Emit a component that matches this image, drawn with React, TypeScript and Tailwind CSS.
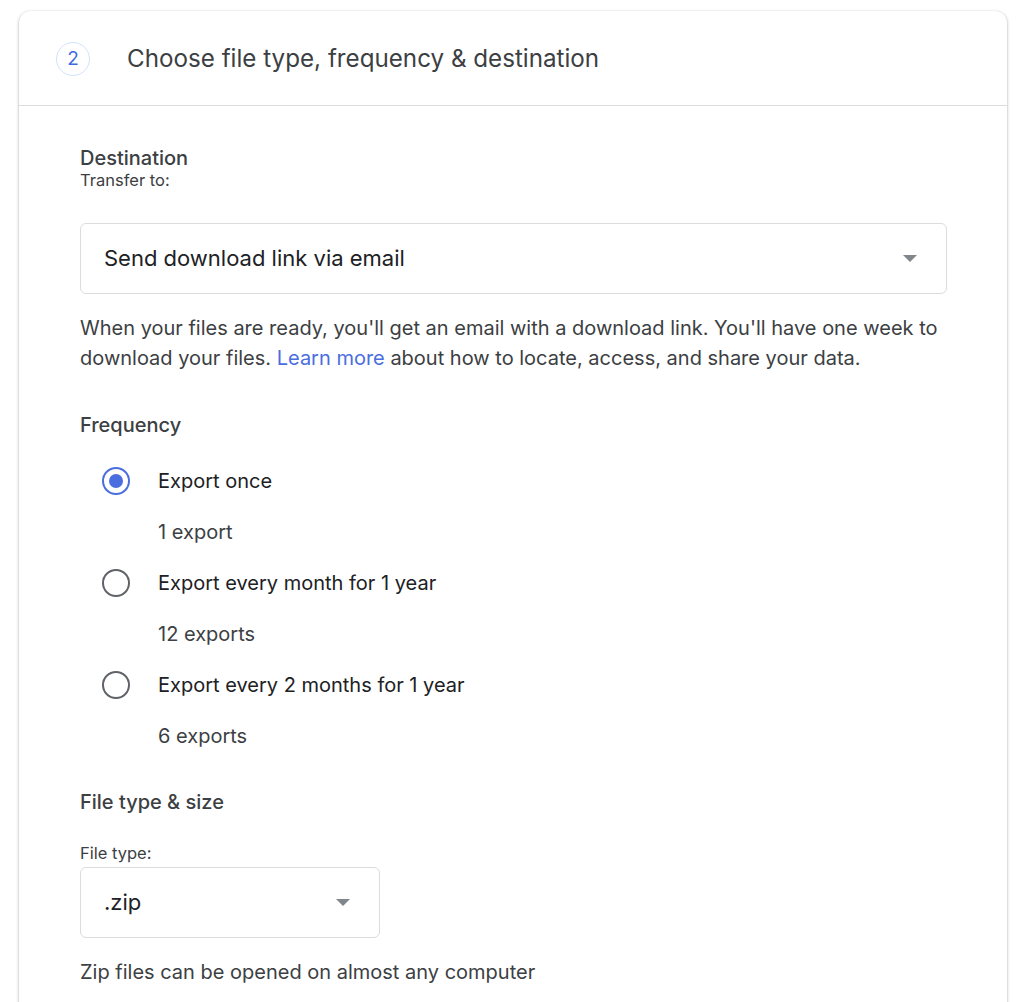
import { useState } from "react";

const font = { fontFamily: "Inter, 'Noto Sans', Arial, sans-serif" };

function Caret() {
  return (
    <svg width="14" height="8" viewBox="0 0 14 8" className="shrink-0">
      <path d="M0 0h14L7 7z" fill="#80868b" />
    </svg>
  );
}

function Select({ value, width }: { value: string; width: string }) {
  return (
    <div
      className={`flex h-[71px] items-center justify-between rounded-[6px] border border-[#dadce0] bg-white pl-[23px] pr-[29px] ${width}`}
    >
      <span className="text-[22px] text-[#202124]">{value}</span>
      <Caret />
    </div>
  );
}

const options = [
  { label: "Export once", sub: "1 export" },
  { label: "Export every month for 1 year", sub: "12 exports" },
  { label: "Export every 2 months for 1 year", sub: "6 exports" },
];

export default function App() {
  const [freq, setFreq] = useState(0);

  return (
    <div className="min-h-screen bg-white pl-[19px] pt-[11px]" style={font}>
      <div className="w-[988px] rounded-[12px] bg-white shadow-[0_1px_2px_0_rgba(60,64,67,0.3),0_1px_3px_1px_rgba(60,64,67,0.15)]">
        {/* Header */}
        <div className="flex h-[95px] items-center border-b border-[#dadce0] pl-[37px] pt-[2px]">
          <div className="flex h-[34px] w-[34px] items-center justify-center rounded-full border border-[#d2e3fc] text-[19px] text-[#4169e1]">
            2
          </div>
          <div className="ml-[37px] text-[24.2px] text-[#3c4043]">
            Choose file type, frequency &amp; destination
          </div>
        </div>

        <div className="px-[61px] pb-[60px] pt-[40px]">
          {/* Destination */}
          <div className="text-[20px] font-medium leading-6 text-[#3c4043]">Destination</div>
          <div className="text-[16.5px] leading-5 text-[#3c4043]">Transfer to:</div>
          <div className="mt-[33px]">
            <Select value="Send download link via email" width="w-[867px]" />
          </div>
          <p className="mt-[19px] text-[20px] leading-[30px] text-[#3c4043]">
            When your files are ready, you'll get an email with a download link. You'll have one week to
            download your files.{" "}
            <a className="text-[#4a6ee0]" href="#">
              Learn more
            </a>{" "}
            about how to locate, access, and share your data.
          </p>

          {/* Frequency */}
          <div className="mt-[40px] text-[20px] font-medium leading-6 text-[#3c4043]">Frequency</div>
          <div className="mt-[18px]">
            {options.map((o, i) => (
              <div key={o.label}>
                <button
                  type="button"
                  onClick={() => setFreq(i)}
                  className="flex h-[51px] items-center pl-[22px] text-left"
                >
                  <span
                    className={`flex h-[28px] w-[28px] items-center justify-center rounded-full border-[2.5px] ${
                      freq === i ? "border-[#4a6ee0]" : "border-[#5f6368]"
                    }`}
                  >
                    {freq === i && <span className="h-[14px] w-[14px] rounded-full bg-[#4a6ee0]" />}
                  </span>
                  <span className="ml-[28px] text-[20px] text-[#202124]">{o.label}</span>
                </button>
                <div className="flex h-[51px] items-center pl-[78px] text-[20px] text-[#3c4043]">{o.sub}</div>
              </div>
            ))}
          </div>

          {/* File type */}
          <div className="mt-[29px] text-[20px] font-medium leading-6 text-[#3c4043]">File type &amp; size</div>
          <div className="mt-[29px] text-[16.5px] leading-5 text-[#3c4043]">File type:</div>
          <div className="mt-[4px]">
            <Select value=".zip" width="w-[300px]" />
          </div>
          <p className="mt-[19px] text-[20px] leading-[30px] text-[#3c4043]">
            Zip files can be opened on almost any computer
          </p>
        </div>
      </div>
    </div>
  );
}
